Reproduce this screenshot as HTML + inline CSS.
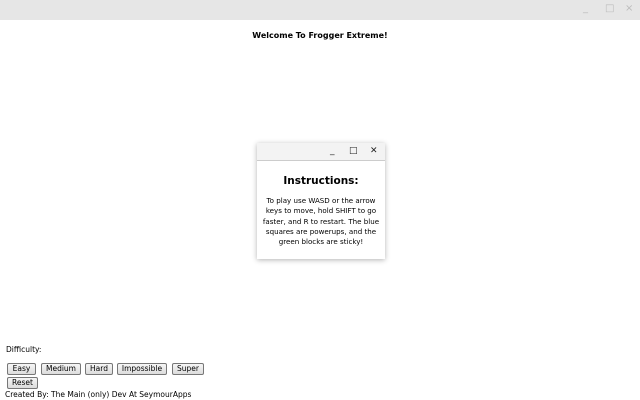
<!DOCTYPE html>
<html><head><style>
*{margin:0;padding:0;box-sizing:border-box}
body{width:640px;height:400px;overflow:hidden;background:#fff;font-family:"DejaVu Sans","Liberation Sans",sans-serif;position:relative;color:#000}
.tb{position:absolute;left:0;top:0;width:640px;height:20px;background:#e6e6e6}
.tb span{position:absolute;top:3px;font-size:10px;color:#bbb}
h1{position:absolute;top:31px;left:0;width:640px;text-align:center;font-size:8px;font-weight:bold}
.dlg{position:absolute;left:257px;top:143px;width:128px;height:116px;background:#fff;box-shadow:0 1px 5px rgba(0,0,0,.3)}
.dtb{height:18px;background:#f3f3f3;border-bottom:1px solid #ccc;position:relative}
.dtb span{position:absolute;top:3px;font-size:9px;color:#222}
.dlg h2{text-align:center;font-size:10.5px;font-weight:bold;margin-top:14px}
.dlg p{text-align:center;font-size:7.1px;line-height:10.3px;margin:9px 0 0;white-space:nowrap}
.lab{position:absolute;left:6px;top:345px;font-size:7.5px}
.b{position:absolute;height:12px;top:363px;border:1px solid #777;border-radius:2px;background:linear-gradient(#f6f6f6,#dcdcdc);font-size:7.5px;text-align:center;line-height:10px}
.cr{position:absolute;left:5px;top:390px;font-size:7.5px}
</style></head><body>
<div class="tb"><span style="left:583px">_</span><span style="left:605px">□</span><span style="left:625px">×</span></div>
<h1>Welcome To Frogger Extreme!</h1>
<div class="dlg"><div class="dtb"><span style="left:73px">_</span><span style="left:92px">□</span><span style="left:113px">✕</span></div>
<h2>Instructions:</h2>
<p>To play use WASD or the arrow<br>keys to move, hold SHIFT to go<br>faster, and R to restart. The blue<br>squares are powerups, and the<br>green blocks are sticky!</p></div>
<div class="lab">Difficulty:</div>
<div class="b" style="left:7px;width:29px">Easy</div>
<div class="b" style="left:41px;width:40px">Medium</div>
<div class="b" style="left:85px;width:28px">Hard</div>
<div class="b" style="left:117px;width:50px">Impossible</div>
<div class="b" style="left:172px;width:32px">Super</div>
<div class="b" style="left:7px;top:377px;width:31px">Reset</div>
<div class="cr">Created By: The Main (only) Dev At SeymourApps</div>
</body></html>
